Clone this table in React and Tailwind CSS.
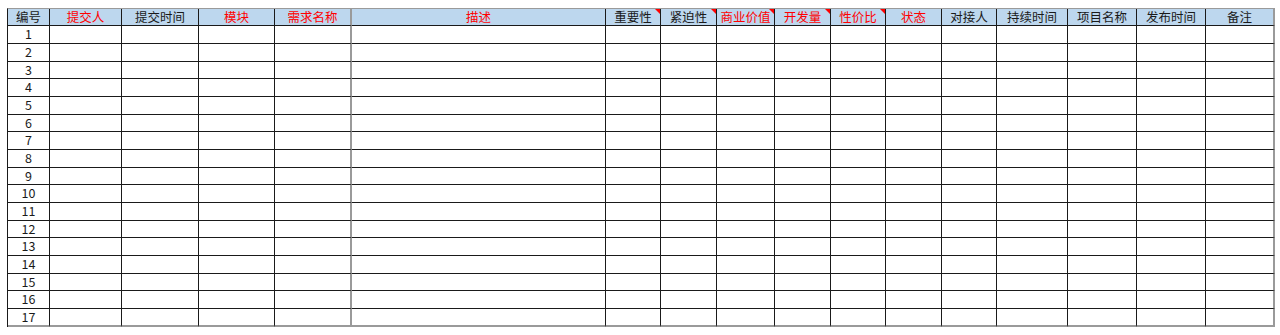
import React from "react";

const headers = [
  { t: "编号", red: false },
  { t: "提交人", red: true },
  { t: "提交时间", red: false },
  { t: "模块", red: true },
  { t: "需求名称", red: true, gray: true },
  { t: "描述", red: true },
  { t: "重要性", red: false, tri: true },
  { t: "紧迫性", red: false, tri: true },
  { t: "商业价值", red: true, tri: true },
  { t: "开发量", red: true, tri: true },
  { t: "性价比", red: true, tri: true },
  { t: "状态", red: true },
  { t: "对接人", red: false },
  { t: "持续时间", red: false },
  { t: "项目名称", red: false },
  { t: "发布时间", red: false },
  { t: "备注", red: false, last: true },
];

const rows = Array.from({ length: 17 }, (_, i) => i + 1);

function cellBorder(h, isLastRow) {
  let c = "border-b border-r border-[#1a1a1a]";
  if (h.gray) c = "border-b border-[#1a1a1a] border-r-2 border-r-[#9a9a9a]";
  if (h.last) c = "border-b border-[#1a1a1a] border-r-2 border-r-[#9a9a9a]";
  if (isLastRow) c += " border-b-2 border-b-[#9a9a9a]";
  return c;
}

export default function App() {
  return (
    <div className="w-[1280px] h-[335px] bg-white pt-2 pl-[7px] overflow-hidden" style={{ fontFamily: '"Noto Sans CJK SC", "Noto Sans", sans-serif' }}>
      <div className="w-[1268px] border-t border-t-[#9a9a9a] border-l border-l-[#1a1a1a] grid grid-cols-[42px_72px_77px_76px_77px_254px_55px_56px_58px_56px_55px_56px_55px_71px_69px_69px_69px]">
        {headers.map((h, i) => (
          <div
            key={"h" + i}
            className={`relative h-[17.3px] bg-[#bdd7ee] flex items-center justify-center text-[12.5px] leading-none ${h.red ? "text-[#ff0000]" : "text-[#1a1a1a]"} ${cellBorder(h, false)}`}
          >
            {h.t}
            {h.tri && (
              <div className="absolute top-0 right-0 w-0 h-0 border-t-[5px] border-l-[5px] border-t-[#ff0000] border-l-transparent" />
            )}
          </div>
        ))}
        {rows.map((r) =>
          headers.map((h, i) => (
            <div
              key={r + "-" + i}
              className={`h-[17.68px] bg-white flex items-center justify-center text-[12.5px] leading-none text-[#1a1a1a] ${cellBorder(h, r === 17)}`}
            >
              {i === 0 ? r : ""}
            </div>
          ))
        )}
      </div>
    </div>
  );
}
